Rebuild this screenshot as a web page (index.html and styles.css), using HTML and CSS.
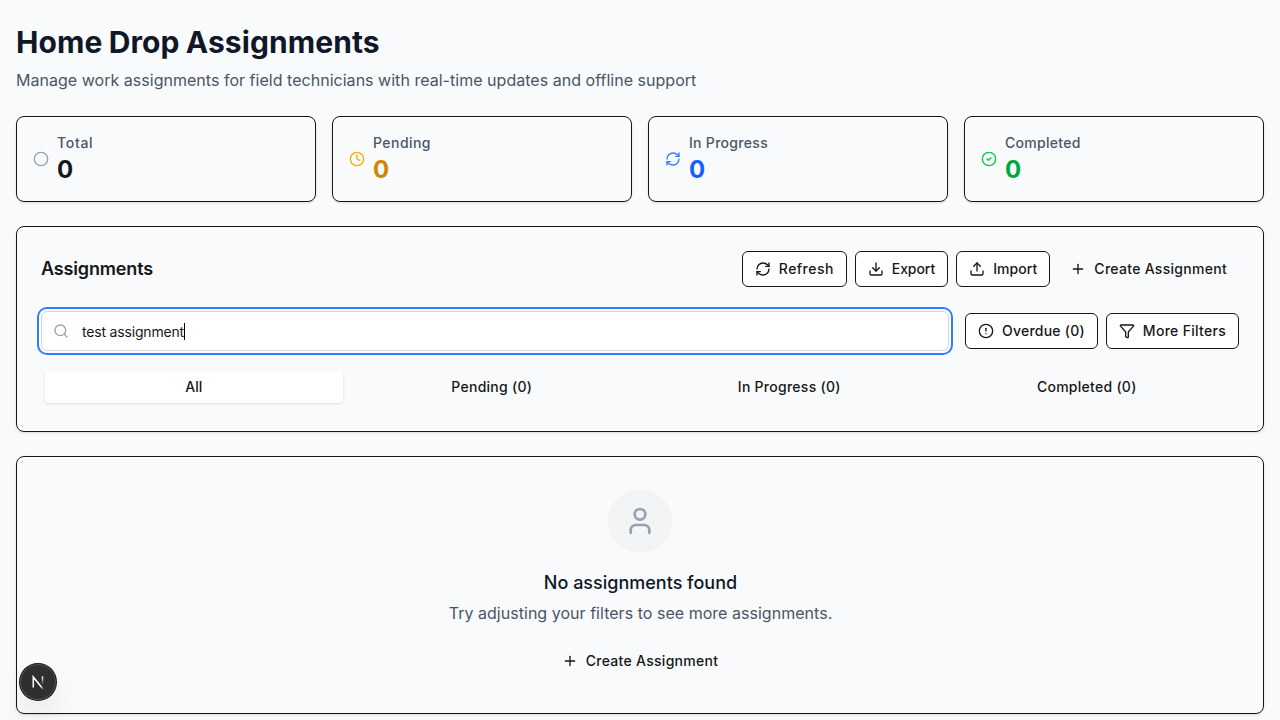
FILE: index.html
```html
<!DOCTYPE html>
<html lang="en">
<head>
<meta charset="utf-8">
<title>Home Drop Assignments</title>
<link rel="stylesheet" href="styles.css">
</head>
<body>
<svg class="sprite" width="0" height="0" aria-hidden="true">
  <symbol id="refresh" viewBox="0 0 24 24"><path d="M3 12a9 9 0 0 1 9-9 9.75 9.75 0 0 1 6.74 2.74L21 8"/><path d="M21 3v5h-5"/><path d="M21 12a9 9 0 0 1-9 9 9.75 9.75 0 0 1-6.74-2.74L3 16"/><path d="M8 16H3v5"/></symbol>
  <symbol id="plus" viewBox="0 0 24 24"><path d="M5 12h14"/><path d="M12 5v14"/></symbol>
</svg>
<main class="page">
  <header class="page-header">
    <h1 class="title">Home Drop Assignments</h1>
    <p class="subtitle">Manage work assignments for field technicians with real-time updates and offline support</p>
  </header>

  <section class="stats">
    <div class="card stat">
      <svg class="icon gray" viewBox="0 0 24 24"><circle cx="12" cy="12" r="10"/></svg>
      <div><p class="stat-label track-widest">Total</p><p class="stat-value">0</p></div>
    </div>
    <div class="card stat">
      <svg class="icon yellow" viewBox="0 0 24 24"><circle cx="12" cy="12" r="10"/><path d="M12 6v6l4 2"/></svg>
      <div><p class="stat-label track-wider">Pending</p><p class="stat-value amber-value">0</p></div>
    </div>
    <div class="card stat">
      <svg class="icon blue"><use href="#refresh"/></svg>
      <div><p class="stat-label">In Progress</p><p class="stat-value blue-value">0</p></div>
    </div>
    <div class="card stat">
      <svg class="icon green" viewBox="0 0 24 24"><circle cx="12" cy="12" r="10"/><path d="m9 12 2 2 4-4"/></svg>
      <div><p class="stat-label">Completed</p><p class="stat-value green-value">0</p></div>
    </div>
  </section>

  <section class="card panel">
    <div class="panel-header">
      <h2 class="panel-title">Assignments</h2>
      <div class="actions">
        <button class="btn outline track-wider"><svg class="icon"><use href="#refresh"/></svg>Refresh</button>
        <button class="btn outline track-tight"><svg class="icon" viewBox="0 0 24 24"><path d="M12 15V3"/><path d="M21 15v4a2 2 0 0 1-2 2H5a2 2 0 0 1-2-2v-4"/><path d="m7 10 5 5 5-5"/></svg>Export</button>
        <button class="btn outline track-slight"><svg class="icon" viewBox="0 0 24 24"><path d="M12 3v12"/><path d="m17 8-5-5-5 5"/><path d="M21 15v4a2 2 0 0 1-2 2H5a2 2 0 0 1-2-2v-4"/></svg>Import</button>
        <button class="btn"><svg class="icon"><use href="#plus"/></svg>Create Assignment</button>
      </div>
    </div>
    <div class="search-row">
      <div class="search">
        <svg class="icon gray" viewBox="0 0 24 24"><circle cx="11" cy="11" r="8"/><path d="m21 21-4.34-4.34"/></svg>
        <span class="query">test assignment</span><span class="caret"></span>
      </div>
      <div class="actions">
        <button class="btn outline track-mid"><svg class="icon" viewBox="0 0 24 24"><circle cx="12" cy="12" r="10"/><path d="M12 8v4"/><path d="M12 16h.01"/></svg>Overdue (0)</button>
        <button class="btn outline"><svg class="icon" viewBox="0 0 24 24"><path d="M10 20a1 1 0 0 0 .553.895l2 1A1 1 0 0 0 14 21v-7a2 2 0 0 1 .517-1.341L21.74 4.67A1 1 0 0 0 21 3H3a1 1 0 0 0-.742 1.67l7.225 7.989A2 2 0 0 1 10 14z"/></svg>More Filters</button>
      </div>
    </div>
    <div class="tabs">
      <button class="tab active">All</button>
      <button class="tab">Pending (0)</button>
      <button class="tab">In Progress (0)</button>
      <button class="tab">Completed (0)</button>
    </div>
  </section>

  <section class="card empty">
    <div class="avatar"><svg class="icon large gray" viewBox="0 0 24 24"><path d="M19 21v-2a4 4 0 0 0-4-4H9a4 4 0 0 0-4 4v2"/><circle cx="12" cy="7" r="4"/></svg></div>
    <h3 class="empty-title">No assignments found</h3>
    <p class="empty-text">Try adjusting your filters to see more assignments.</p>
    <button class="btn tall"><svg class="icon"><use href="#plus"/></svg>Create Assignment</button>
  </section>
</main>
<div class="dev-badge">
  <svg width="36" height="36" viewBox="0 0 36 36" fill="none">
    <defs>
      <linearGradient id="diag" x1="18" y1="18" x2="24.5" y2="25" gradientUnits="userSpaceOnUse"><stop stop-color="#fff"/><stop offset=".5" stop-color="#fff"/><stop offset="1" stop-color="#fff" stop-opacity="0"/></linearGradient>
      <linearGradient id="stem" x1="0" y1="12.5" x2="0" y2="21" gradientUnits="userSpaceOnUse"><stop stop-color="#fff"/><stop offset="1" stop-color="#fff" stop-opacity="0"/></linearGradient>
    </defs>
    <path d="M13.3 23.5V13L23 25" stroke="url(#diag)" stroke-width="1.6"/>
    <path d="M22.5 12.3v10" stroke="url(#stem)" stroke-width="1.5"/>
  </svg>
</div>
</body>
</html>
```

FILE: styles.css
```css
* { box-sizing: border-box; margin: 0; padding: 0; }
body {
  height: 720px;
  overflow: hidden;
  background: #f9fafc;
  color: #171717;
  font-family: Inter, sans-serif;
  font-size: 16px;
  line-height: 24px;
}
.sprite { position: absolute; }
.page { display: flex; flex-direction: column; gap: 24px; padding: 24px 16px; }
.title { font-size: 30px; line-height: 36px; font-weight: 700; letter-spacing: .09px; word-spacing: -.9px; color: #101828; }
.subtitle { margin-top: 8px; letter-spacing: .026px; color: #4a5565; }
.card {
  border: 1px solid #171717;
  border-radius: 8px;
  box-shadow: 0 1px 3px rgba(0,0,0,.1), 0 1px 2px -1px rgba(0,0,0,.1);
}
.stats { display: grid; grid-template-columns: repeat(4, 1fr); gap: 16px; }
.stat { display: flex; align-items: center; gap: 8px; padding: 16px; }
.stat-label { font-size: 14px; line-height: 20px; font-weight: 500; letter-spacing: .3px; color: #4a5565; }
.stat-value { height: 32px; font-size: 24px; line-height: 34px; font-weight: 700; }
.icon {
  width: 16px; height: 16px; flex: none;
  fill: none; stroke: currentColor; stroke-width: 2;
  stroke-linecap: round; stroke-linejoin: round;
}
.large { width: 32px; height: 32px; }
.gray { color: #99a1af; }
.yellow { color: #f0b100; }
.blue { color: #2b7fff; }
.green { color: #00c950; }
.amber-value { color: #d08700; }
.blue-value { color: #155dfc; }
.green-value { color: #00a63e; }
.panel { display: flex; flex-direction: column; padding: 24px; }
.panel-header { display: flex; align-items: center; justify-content: space-between; margin-bottom: 24px; }
.panel-title { font-size: 18px; line-height: 28px; font-weight: 600; letter-spacing: -.16px; }
.actions { display: flex; gap: 8px; }
.btn {
  display: inline-flex; align-items: center; gap: 8px;
  height: 36px; padding: 0 12px;
  border: 0; border-radius: 6px; background: none; color: #171717;
  font: 500 14px/20px Inter, sans-serif;
  letter-spacing: .29px;
  white-space: nowrap;
}
.outline { border: 1px solid #171717; background: #fff; }
.tall { height: 40px; padding: 0 16px; }
.track-widest { letter-spacing: .7px; }
.track-wider { letter-spacing: .45px; }
.track-mid { letter-spacing: .24px; }
.track-slight { letter-spacing: .07px; }
.track-tight { letter-spacing: -.07px; }
.search-row { display: flex; align-items: center; gap: 16px; margin-bottom: 16px; }
.search {
  flex: 1; display: flex; align-items: center;
  height: 40px; padding: 0 12px 0 11px;
  border: 1px solid #d1d5dc; border-radius: 6px; background: #fff;
  box-shadow: 0 0 0 2px #fff, 0 0 0 4px #2b7fff;
}
.query { margin-left: 13px; padding-top: 1px; font-size: 14px; line-height: 20px; letter-spacing: -.18px; }
.caret { width: 1px; height: 17px; background: #000; }
.tabs { display: grid; grid-template-columns: repeat(4, 1fr); height: 40px; padding: 4px; }
.tab { padding-left: 1px; border: 0; border-radius: 4px; background: none; color: #171717; font: 500 14px/20px Inter, sans-serif; letter-spacing: .27px; }
.active { padding-left: 0; background: #fff; letter-spacing: 0; box-shadow: 0 1px 3px rgba(0,0,0,.1), 0 1px 2px -1px rgba(0,0,0,.1); }
.empty { display: flex; flex-direction: column; align-items: center; padding: 32px; }
.avatar { display: flex; align-items: center; justify-content: center; width: 64px; height: 64px; border-radius: 50%; background: #f3f4f6; }
.empty-title { margin-top: 16px; padding-left: 1px; font-size: 18px; line-height: 28px; font-weight: 500; color: #101828; }
.empty-text { margin: 4px 0 16px; padding-left: 1px; letter-spacing: .03px; color: #4a5565; }
.dev-badge {
  position: absolute; left: 20px; top: 664px;
  width: 36px; height: 36px; border-radius: 50%;
  background: #2f2f2f;
  box-shadow: 0 0 0 1px #171717, inset 0 0 0 1px rgba(255,255,255,.17), 0 16px 32px -8px rgba(0,0,0,.24);
}
```
